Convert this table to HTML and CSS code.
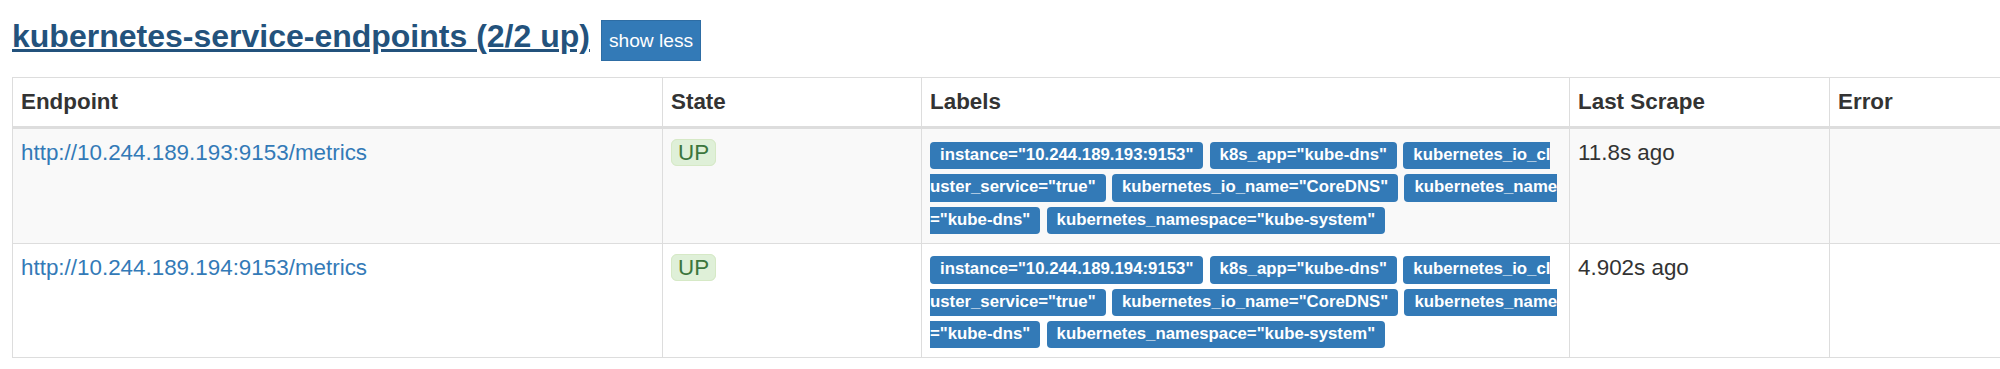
FILE: index.html
```html
<!DOCTYPE html>
<html lang="en">

<head>
    <meta charset="UTF-8">
    <meta name="viewport" content="width=device-width, initial-scale=1.0">
    <title>Targets</title>
    <link rel="stylesheet" href="styles.css">
</head>

<body>

    <!-- job header -->
    <h2 class="job-title">
        <a href="#job-kubernetes-service-endpoints">kubernetes-service-endpoints (2/2 up)</a>
        <button class="btn-toggle">show less</button>
    </h2>

    <table class="targets">
        <colgroup>
            <col class="col-endpoint">
            <col class="col-state">
            <col class="col-labels">
            <col class="col-scrape">
            <col class="col-error">
        </colgroup>
        <thead>
            <tr>
                <th>Endpoint</th>
                <th>State</th>
                <th>Labels</th>
                <th>Last Scrape</th>
                <th>Error</th>
            </tr>
        </thead>
        <tbody>
            <tr class="striped">
                <td class="endpoint"><a href="#">http://10.244.189.193:9153/metrics</a></td>
                <td><span class="state-up">UP</span></td>
                <td class="labels">
                    <span class="label">instance="10.244.189.193:9153"</span>
                    <span class="label">k8s_app="kube-dns"</span>
                    <span class="label">kubernetes_io_cluster_service="true"</span>
                    <span class="label">kubernetes_io_name="CoreDNS"</span>
                    <span class="label">kubernetes_name="kube-dns"</span>
                    <span class="label">kubernetes_namespace="kube-system"</span>
                </td>
                <td>11.8s ago</td>
                <td></td>
            </tr>
            <tr>
                <td class="endpoint"><a href="#">http://10.244.189.194:9153/metrics</a></td>
                <td><span class="state-up">UP</span></td>
                <td class="labels">
                    <span class="label">instance="10.244.189.194:9153"</span>
                    <span class="label">k8s_app="kube-dns"</span>
                    <span class="label">kubernetes_io_cluster_service="true"</span>
                    <span class="label">kubernetes_io_name="CoreDNS"</span>
                    <span class="label">kubernetes_name="kube-dns"</span>
                    <span class="label">kubernetes_namespace="kube-system"</span>
                </td>
                <td>4.902s ago</td>
                <td></td>
            </tr>
        </tbody>
    </table>

</body>

</html>
```

FILE: styles.css
```css
html,
body {
    overflow: hidden;
}

body {
    font-family: 'Liberation Sans', Arial, sans-serif;
    font-size: 22.4px;
    line-height: 32.4px;
    color: #333;
    background-color: #fff;
    margin: 0;
    padding: 0 12px;
}

a {
    color: #337ab7;
    text-decoration: none;
}

.job-title {
    display: flex;
    align-items: flex-start;
    gap: 11px;
    font-size: 32px;
    font-weight: 700;
    line-height: 38px;
    margin: 17px 0 16px;
}

.job-title a {
    color: #23527c;
    text-decoration: underline;
}

.btn-toggle {
    font-family: inherit;
    font-size: 19.2px;
    line-height: 29px;
    padding: 5px 7px;
    margin-top: 3px;
    color: #fff;
    background-color: #337ab7;
    border: 1px solid #2e6da4;
    border-radius: 0;
    cursor: pointer;
}

.targets {
    width: 2000px;
    table-layout: fixed;
    border-collapse: collapse;
}

.col-endpoint {
    width: 650px;
}

.col-state {
    width: 259px;
}

.col-labels {
    width: 648px;
}

.col-scrape {
    width: 260px;
}

.targets th,
.targets td {
    border: 1px solid #ddd;
    padding: 8px;
    text-align: left;
    vertical-align: top;
}

.targets th {
    font-weight: 700;
    border-bottom: 3px solid #ddd;
}

.striped td {
    background-color: #f9f9f9;
}

.state-up {
    padding: 0 6px;
    color: #3c763d;
    background-color: #dff0d8;
    border: 1.5px solid #d6e9c6;
    border-radius: 6px;
}

.targets td.labels {
    padding-right: 10px;
    word-break: break-all;
}

.label {
    font-size: 16.8px;
    font-weight: 700;
    line-height: 1;
    padding: 3.4px 10px 5px;
    color: #fff;
    background-color: #337ab7;
    border-radius: 4px;
}
```
